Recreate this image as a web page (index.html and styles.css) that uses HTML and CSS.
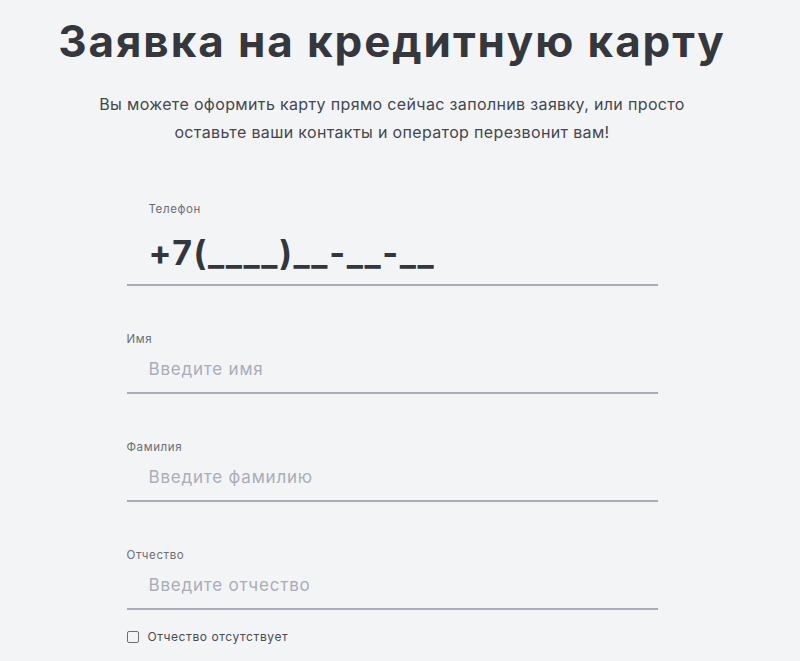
FILE: index.html
```html
<!DOCTYPE html>
<html lang="ru">
<head>
<meta charset="utf-8">
<title>Заявка на кредитную карту</title>
<link rel="stylesheet" href="styles.css">
</head>
<body>
<main class="page">
  <h1 class="title">Заявка на кредитную карту</h1>
  <p class="lead">Вы можете оформить карту прямо сейчас заполнив заявку, или просто<br>оставьте ваши контакты и оператор перезвонит вам!</p>
  <form class="form">
    <div class="field field-phone">
      <label class="label label-phone">Телефон</label>
      <div class="input input-phone">+7(____)__-__-__</div>
    </div>
    <div class="field">
      <label class="label">Имя</label>
      <div class="input placeholder">Введите имя</div>
    </div>
    <div class="field">
      <label class="label">Фамилия</label>
      <div class="input placeholder">Введите фамилию</div>
    </div>
    <div class="field field-last">
      <label class="label">Отчество</label>
      <div class="input placeholder">Введите отчество</div>
    </div>
    <div class="check">
      <span class="box"></span>
      <span class="check-text">Отчество отсутствует</span>
    </div>
  </form>
</main>
</body>
</html>
```
FILE: styles.css
```css
html, body {
  margin: 0;
  padding: 0;
  background: #f3f4f6;
}
body {
  font-family: Inter, Roboto, "Noto Sans", sans-serif;
  height: 661px;
  overflow: hidden;
}
.page {
  width: 784px;
  display: flex;
  flex-direction: column;
  align-items: center;
}
.title {
  margin: 15px 0 0;
  font-size: 44px;
  line-height: 52px;
  font-weight: 700;
  color: #35373d;
  letter-spacing: 1.9px;
  white-space: nowrap;
}
.lead {
  margin: 23px 0 0;
  font-size: 16px;
  line-height: 28px;
  letter-spacing: 0.35px;
  color: #45474d;
  text-align: center;
}
.form {
  width: 531px;
  margin-top: 55px;
  display: flex;
  flex-direction: column;
}
.field {
  display: flex;
  flex-direction: column;
  margin-bottom: 45px;
}
.field-last {
  margin-bottom: 19px;
}
.label {
  font-size: 11.5px;
  line-height: 16px;
  letter-spacing: 0.6px;
  color: #6c6e74;
}
.label-phone {
  padding-left: 22px;
}
.input {
  height: 45px;
  padding-left: 22px;
  border-bottom: 2px solid #a7abb8;
  font-size: 17px;
  line-height: 45px;
  letter-spacing: 0.8px;
}
.placeholder {
  color: #a9adb9;
}
.input-phone {
  height: 67px;
  line-height: 72px;
  font-size: 34px;
  font-weight: 700;
  letter-spacing: 1.6px;
  color: #33363c;
}
.check {
  display: flex;
  align-items: center;
  gap: 9px;
}
.box {
  width: 10px;
  height: 10px;
  border: 1.6px solid #6c6e74;
  border-radius: 2px;
}
.check-text {
  font-size: 12px;
  line-height: 16px;
  letter-spacing: 0.6px;
  color: #4a4c52;
}
```
